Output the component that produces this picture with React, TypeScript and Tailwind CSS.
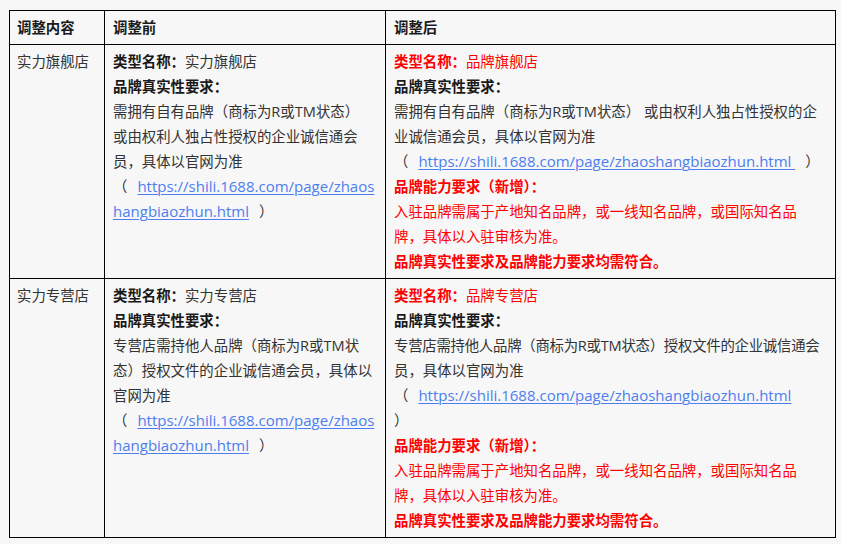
import React from "react";

const L = ({ children, className = "" }: { children?: React.ReactNode; className?: string }) => (
  <div className={"whitespace-nowrap leading-[25px] h-[25px] " + className}>{children}</div>
);

const A = ({ children }: { children: React.ReactNode }) => (
  <a className="text-[#4d7ef0] underline underline-offset-2 decoration-1 text-[15px]">{children}</a>
);

const B = ({ children }: { children: React.ReactNode }) => (
  <span className="font-bold text-[#1a1a1a]">{children}</span>
);

const R = ({ children, bold = false }: { children: React.ReactNode; bold?: boolean }) => (
  <span className={"text-[#ff0000] " + (bold ? "font-bold" : "")}>{children}</span>
);

const Lat = ({ children }: { children: React.ReactNode }) => <span className="text-[14.6px]">{children}</span>;

export default function App() {
  const td = "border border-black align-top px-2 py-1";
  return (
    <div
      className="w-[841px] h-[544px] bg-[#f7f7f7] pt-[10px] pl-[9px] text-[14.4px] text-[#333]"
      style={{ fontFamily: '"Open Sans", "Noto Sans CJK SC", sans-serif' }}
    >
      <table className="border-collapse table-fixed w-[826px]">
        <colgroup>
          <col className="w-[95px]" />
          <col className="w-[281px]" />
          <col className="w-[450px]" />
        </colgroup>
        <thead>
          <tr>
            <th className={td + " text-left font-bold text-[#1a1a1a] pl-[7px]"}><L>调整内容</L></th>
            <th className={td + " text-left font-bold text-[#1a1a1a]"}><L>调整前</L></th>
            <th className={td + " text-left font-bold text-[#1a1a1a]"}><L>调整后</L></th>
          </tr>
        </thead>
        <tbody>
          <tr>
            <td className={td + " pl-[7px]"}><L>实力旗舰店</L></td>
            <td className={td}>
              <L><B>类型名称：</B>实力旗舰店</L>
              <L><B>品牌真实性要求：</B></L>
              <L>需拥有自有品牌（商标为<Lat>R</Lat>或<Lat>TM</Lat>状态）</L>
              <L>或由权利人独占性授权的企业诚信通会</L>
              <L>员，具体以官网为准</L>
              <L>（<span className="ml-[10px]"><A>https://shili.1688.com/page/zhaos</A></span></L>
              <L><A>hangbiaozhun.html</A><span className="ml-[10px]">）</span></L>
            </td>
            <td className={td}>
              <L><R bold>类型名称：</R><R>品牌旗舰店</R></L>
              <L><B>品牌真实性要求：</B></L>
              <L>需拥有自有品牌（商标为<Lat>R</Lat>或<Lat>TM</Lat>状态）<span className="ml-[4px]">或由权利人独占性授权的企</span></L>
              <L>业诚信通会员，具体以官网为准</L>
              <L>（<span className="ml-[10px]"><A>https://shili.1688.com/page/zhaoshangbiaozhun.html </A></span><span className="ml-[10px]">）</span></L>
              <L><R bold>品牌能力要求（新增）：</R></L>
              <L><R>入驻品牌需属于产地知名品牌，或一线知名品牌，或国际知名品</R></L>
              <L><R>牌，具体以入驻审核为准。</R></L>
              <L><R bold>品牌真实性要求及品牌能力要求均需符合。</R></L>
            </td>
          </tr>
          <tr>
            <td className={td + " pl-[7px]"}><L>实力专营店</L></td>
            <td className={td}>
              <L><B>类型名称：</B>实力专营店</L>
              <L><B>品牌真实性要求：</B></L>
              <L>专营店需持他人品牌（商标为<Lat>R</Lat>或<Lat>TM</Lat>状</L>
              <L>态）授权文件的企业诚信通会员，具体以</L>
              <L>官网为准</L>
              <L>（<span className="ml-[10px]"><A>https://shili.1688.com/page/zhaos</A></span></L>
              <L><A>hangbiaozhun.html</A><span className="ml-[10px]">）</span></L>
            </td>
            <td className={td}>
              <L><R bold>类型名称：</R><R>品牌专营店</R></L>
              <L><B>品牌真实性要求：</B></L>
              <L className="tracking-[-0.25px]">专营店需持他人品牌（商标为<Lat>R</Lat>或<Lat>TM</Lat>状态）授权文件的企业诚信通会</L>
              <L>员，具体以官网为准</L>
              <L>（<span className="ml-[10px]"><A>https://shili.1688.com/page/zhaoshangbiaozhun.html </A></span></L>
              <L>）</L>
              <L><R bold>品牌能力要求（新增）：</R></L>
              <L><R>入驻品牌需属于产地知名品牌，或一线知名品牌，或国际知名品</R></L>
              <L><R>牌，具体以入驻审核为准。</R></L>
              <L><R bold>品牌真实性要求及品牌能力要求均需符合。</R></L>
            </td>
          </tr>
        </tbody>
      </table>
    </div>
  );
}
